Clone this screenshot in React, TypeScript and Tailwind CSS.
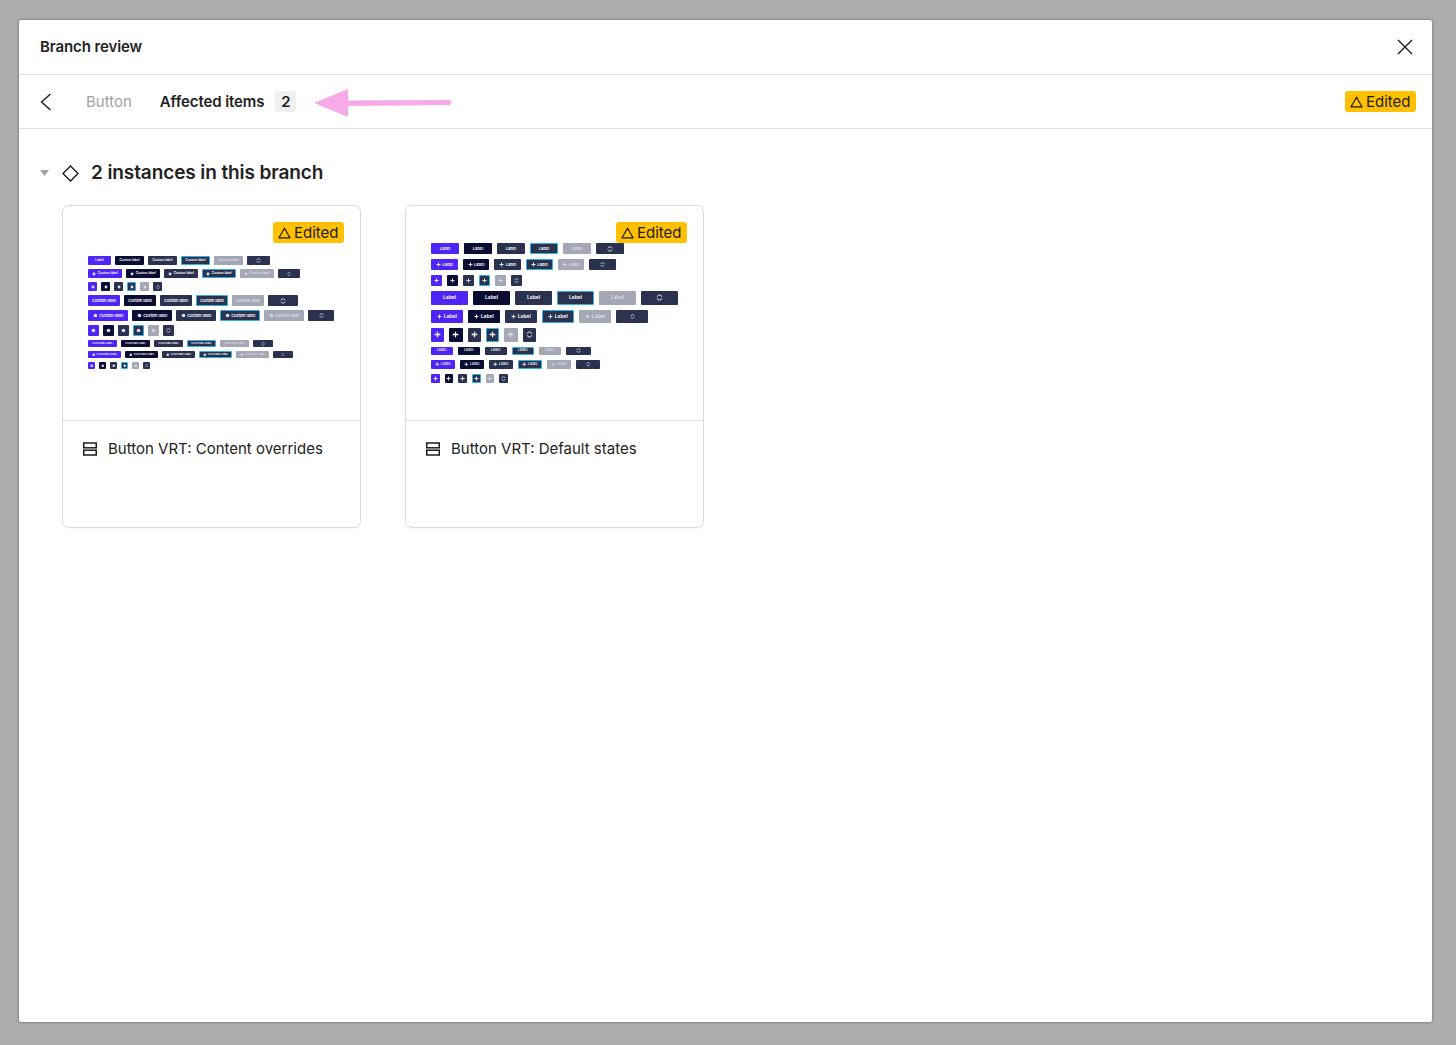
import React from 'react';

type Row = {
  h: number;
  w: number[];
  font: number;
  label?: string;
  first?: string;
  icon?: boolean;
  iconSize: number;
};

const variants = [
  'bg-[#4f25f7] text-white',
  'bg-[#0a0e33] text-white',
  'bg-[#2b3250] text-white',
  'bg-[#2b3250] text-white border border-[#2fb0e2]',
  'bg-[#a4a8b4] text-[#dcdee4]',
  'bg-[#2b3250] text-white',
];

const contentRows: Row[] = [
  { h: 9, w: [23, 29, 29, 29, 29, 23], font: 3.2, label: 'Custom label', first: 'Label', iconSize: 5 },
  { h: 9, w: [34, 34, 34, 34, 34, 22], font: 3.2, label: 'Custom label', icon: true, iconSize: 4 },
  { h: 9, w: [9, 9, 9, 9, 9, 9], font: 3, icon: true, iconSize: 4 },
  { h: 11, w: [32, 32, 32, 32, 32, 30], font: 3.8, label: 'Custom label', iconSize: 6 },
  { h: 11, w: [40, 40, 40, 40, 40, 26], font: 3.8, label: 'Custom label', icon: true, iconSize: 5 },
  { h: 11, w: [11, 11, 11, 11, 11, 11], font: 3, icon: true, iconSize: 5 },
  { h: 7, w: [29, 29, 29, 29, 29, 20], font: 2.6, label: 'CUSTOM LABEL', iconSize: 4 },
  { h: 7, w: [33, 33, 33, 33, 33, 20], font: 2.6, label: 'CUSTOM LABEL', icon: true, iconSize: 3.5 },
  { h: 7, w: [7, 7, 7, 7, 7, 7], font: 3, icon: true, iconSize: 3.5 },
];

const defaultRows: Row[] = [
  { h: 11, w: [28, 28, 28, 28, 28, 28], font: 4, label: 'Label', iconSize: 6 },
  { h: 11, w: [26.67, 26.67, 26.67, 26.67, 26.67, 26.67], font: 4, label: 'Label', icon: true, iconSize: 5 },
  { h: 11, w: [11, 11, 11, 11, 11, 11], font: 4, icon: true, iconSize: 5 },
  { h: 13.67, w: [37, 37, 37, 37, 37, 37], font: 5, label: 'Label', iconSize: 7 },
  { h: 13.67, w: [32, 32, 32, 32, 32, 32], font: 5, label: 'Label', icon: true, iconSize: 5 },
  { h: 13.33, w: [13.33, 13.33, 13.33, 13.33, 13.33, 13.33], font: 4, icon: true, iconSize: 7 },
  { h: 8.67, w: [22, 22, 22, 22, 22, 25], font: 3.2, label: 'LABEL', iconSize: 5 },
  { h: 8.67, w: [24, 24, 24, 24, 24, 24], font: 3.2, label: 'LABEL', icon: true, iconSize: 4.5 },
  { h: 8.67, w: [8.67, 8.67, 8.67, 8.67, 8.67, 8.67], font: 3, icon: true, iconSize: 5 },
];

function PlusGlyph({ size }: { size: number }) {
  return (
    <svg width={size} height={size} viewBox="0 0 10 10" fill="none" stroke="currentColor" strokeWidth="1.8">
      <path d="M5 1v8M1 5h8" />
    </svg>
  );
}

function DotGlyph({ size }: { size: number }) {
  return (
    <svg width={size} height={size} viewBox="0 0 10 10" fill="currentColor" opacity="0.85">
      <circle cx="5" cy="5" r="3.6" />
    </svg>
  );
}

function LoopGlyph({ size }: { size: number }) {
  return (
    <svg width={size} height={size} viewBox="0 0 10 10" fill="none" stroke="currentColor" strokeWidth="1.2">
      <path d="M1.6 4a3.5 3.5 0 0 1 6.8 0M8.4 6a3.5 3.5 0 0 1-6.8 0" />
    </svg>
  );
}

function MiniButton({ row, index, plus }: { row: Row; index: number; plus: boolean }) {
  const last = index === 5;
  const text = index === 0 && row.first ? row.first : row.label;
  return (
    <div
      className={`flex items-center justify-center gap-[1.5px] overflow-hidden rounded-[1px] font-semibold leading-none whitespace-nowrap ${variants[index]}`}
      style={{ width: row.w[index], height: row.h, fontSize: row.font }}
    >
      {last ? (
        <LoopGlyph size={row.iconSize} />
      ) : (
        <>
          {row.icon && (plus ? <PlusGlyph size={row.iconSize} /> : <DotGlyph size={row.iconSize} />)}
          {text && <span>{text}</span>}
        </>
      )}
    </div>
  );
}

function EditedBadge({ className = '' }: { className?: string }) {
  return (
    <div className={`flex h-[21px] w-[71px] items-center gap-[3px] rounded-[3px] bg-[#ffc000] pl-[5px] text-[15px] leading-none text-[#1c1c1c] ${className}`}>
      <svg width="13" height="12" viewBox="0 0 13 12" fill="none" stroke="#1c1c1c" strokeWidth="1.2" strokeLinejoin="round">
        <path d="M6.5 1.2 12 10.8H1z" />
      </svg>
      <span>Edited</span>
    </div>
  );
}

function ItemCard({ title, rows, gap, top, plus }: { title: string; rows: Row[]; gap: string; top: string; plus: boolean }) {
  return (
    <div className="relative flex h-[323px] w-[299px] flex-col rounded-[7px] border border-[#dcdcdc] shadow-[0_1px_1px_rgba(0,0,0,0.04)]">
      <EditedBadge className="absolute top-[16px] right-[16px]" />
      <div className={`h-[215px] border-b border-[#e2e2e2] pl-[25px] ${top}`}>
        <div className={`flex flex-col ${gap}`}>
          {rows.map((row, r) => (
            <div key={r} className={`flex ${gap}`}>
              {row.w.map((_, i) => (
                <MiniButton key={i} row={row} index={i} plus={plus} />
              ))}
            </div>
          ))}
        </div>
      </div>
      <div className="flex items-center gap-[11px] pt-[18px] pl-[20px] text-[15px] leading-[19px] text-[#222222]">
        <svg width="14" height="14" viewBox="0 0 14 14" fill="none" stroke="#1c1c1c" strokeWidth="1.5">
          <rect x="0.75" y="1" width="12.5" height="4.8" />
          <rect x="0.75" y="8.2" width="12.5" height="4.8" />
        </svg>
        <span>{title}</span>
      </div>
    </div>
  );
}

export default function App() {
  return (
    <div className="h-[1045px] w-full overflow-hidden bg-[#adadad] pt-[20px] pr-[24px] pb-[23px] pl-[19px] font-['Inter',sans-serif]">
      <div className="flex h-full flex-col rounded-[2px] bg-white shadow-[0_0_3px_rgba(0,0,0,0.45)]">
        <header className="flex h-[55px] items-center justify-between border-b border-[#e0e0e0] pr-[19px] pl-[21px]">
          <h1 className="text-[15px] font-semibold tracking-[-0.1px] text-[#222222]">Branch review</h1>
          <svg width="16" height="16" viewBox="0 0 16 16" fill="none" stroke="#1c1c1c" strokeWidth="1.4">
            <path d="M1 1l14 14M15 1 1 15" />
          </svg>
        </header>

        <nav className="relative flex h-[54px] items-center border-b border-[#e0e0e0] pr-[16px] pl-[21px]">
          <svg width="12" height="18" viewBox="0 0 12 18" fill="none" stroke="#1c1c1c" strokeWidth="1.4">
            <path d="M10.5 1 1.5 9l9 8" />
          </svg>
          <span className="ml-[34px] pt-[2px] text-[15px] text-[#a3a3a3]">Button</span>
          <span className="ml-[28px] pt-[2px] text-[15px] font-semibold tracking-[-0.1px] text-[#222222]">Affected items</span>
          <span className="ml-[11px] flex h-[21px] w-[21px] items-center justify-center rounded-[2px] bg-[#f0f0f0] pt-[1px] text-[15px] font-semibold text-[#222222]">2</span>
          <svg className="absolute top-[14px] left-[295px]" width="138" height="28" viewBox="0 0 138 28" fill="#f8a9e8">
            <path d="M0 14 34 0v11.5l102-.5q1.5 0 1.5 2.5t-1.5 2.5L34 17v11z" />
          </svg>
          <EditedBadge className="ml-auto" />
        </nav>

        <main className="flex-1 pt-[33px] pl-[21px]">
          <div className="flex h-[22px] items-center">
            <svg width="9" height="6" viewBox="0 0 9 6" fill="#a3a3a3">
              <path d="M0 0h9L4.5 6z" />
            </svg>
            <svg className="ml-[13px]" width="17" height="17" viewBox="0 0 17 17" fill="none" stroke="#1c1c1c" strokeWidth="1.4">
              <path d="M8.5 1 16 8.5 8.5 16 1 8.5z" />
            </svg>
            <h2 className="ml-[12px] text-[19px] font-semibold tracking-[-0.1px] text-[#222222]">2 instances in this branch</h2>
          </div>
          <div className="mt-[21px] ml-[22px] flex gap-[44px]">
            <ItemCard title="Button VRT: Content overrides" rows={contentRows} gap="gap-[4px]" top="pt-[50px]" plus={false} />
            <ItemCard title="Button VRT: Default states" rows={defaultRows} gap="gap-[5px]" top="pt-[37px]" plus={true} />
          </div>
        </main>
      </div>
    </div>
  );
}
